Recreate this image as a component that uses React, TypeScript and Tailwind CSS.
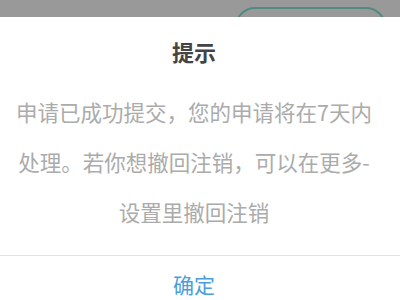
import React from 'react';

const App: React.FC = () => {
    return (
        <div
            className="w-[400px] h-[300px] overflow-hidden bg-white flex flex-col"
            style={{ fontFamily: '"Noto Sans CJK SC", "Noto Sans", sans-serif' }}
        >
            {/* Dimmed page behind the dialog */}
            <div className="h-[17px] shrink-0 bg-[#999999] overflow-hidden flex justify-end pr-[14px] pt-[7px]">
                <div className="w-[151px] h-[40px] shrink-0 rounded-[20px] border-2 border-[#4f8b82]"></div>
            </div>

            {/* Dialog */}
            <div className="flex-1 flex flex-col bg-white">
                <h2 className="pt-[19px] pr-[12px] text-center text-[22px] leading-[30px] font-bold text-[#444444]">提示</h2>

                <p className="mt-[21px] pr-[12px] text-center text-[21.5px] leading-[50px] text-[#ababab] whitespace-nowrap">
                    申请已成功提交，您的申请将在7天内
                    <br />
                    处理。若你想撤回注销，可以在更多-
                    <br />
                    设置里撤回注销
                </p>

                <div className="mt-[18px] h-px bg-[#e3e3e3]"></div>

                <button className="pt-[13px] pr-[12px] text-center text-[21px] leading-[30px] text-[#4a9edc]">
                    确定
                </button>
            </div>
        </div>
    );
};

export default App;
